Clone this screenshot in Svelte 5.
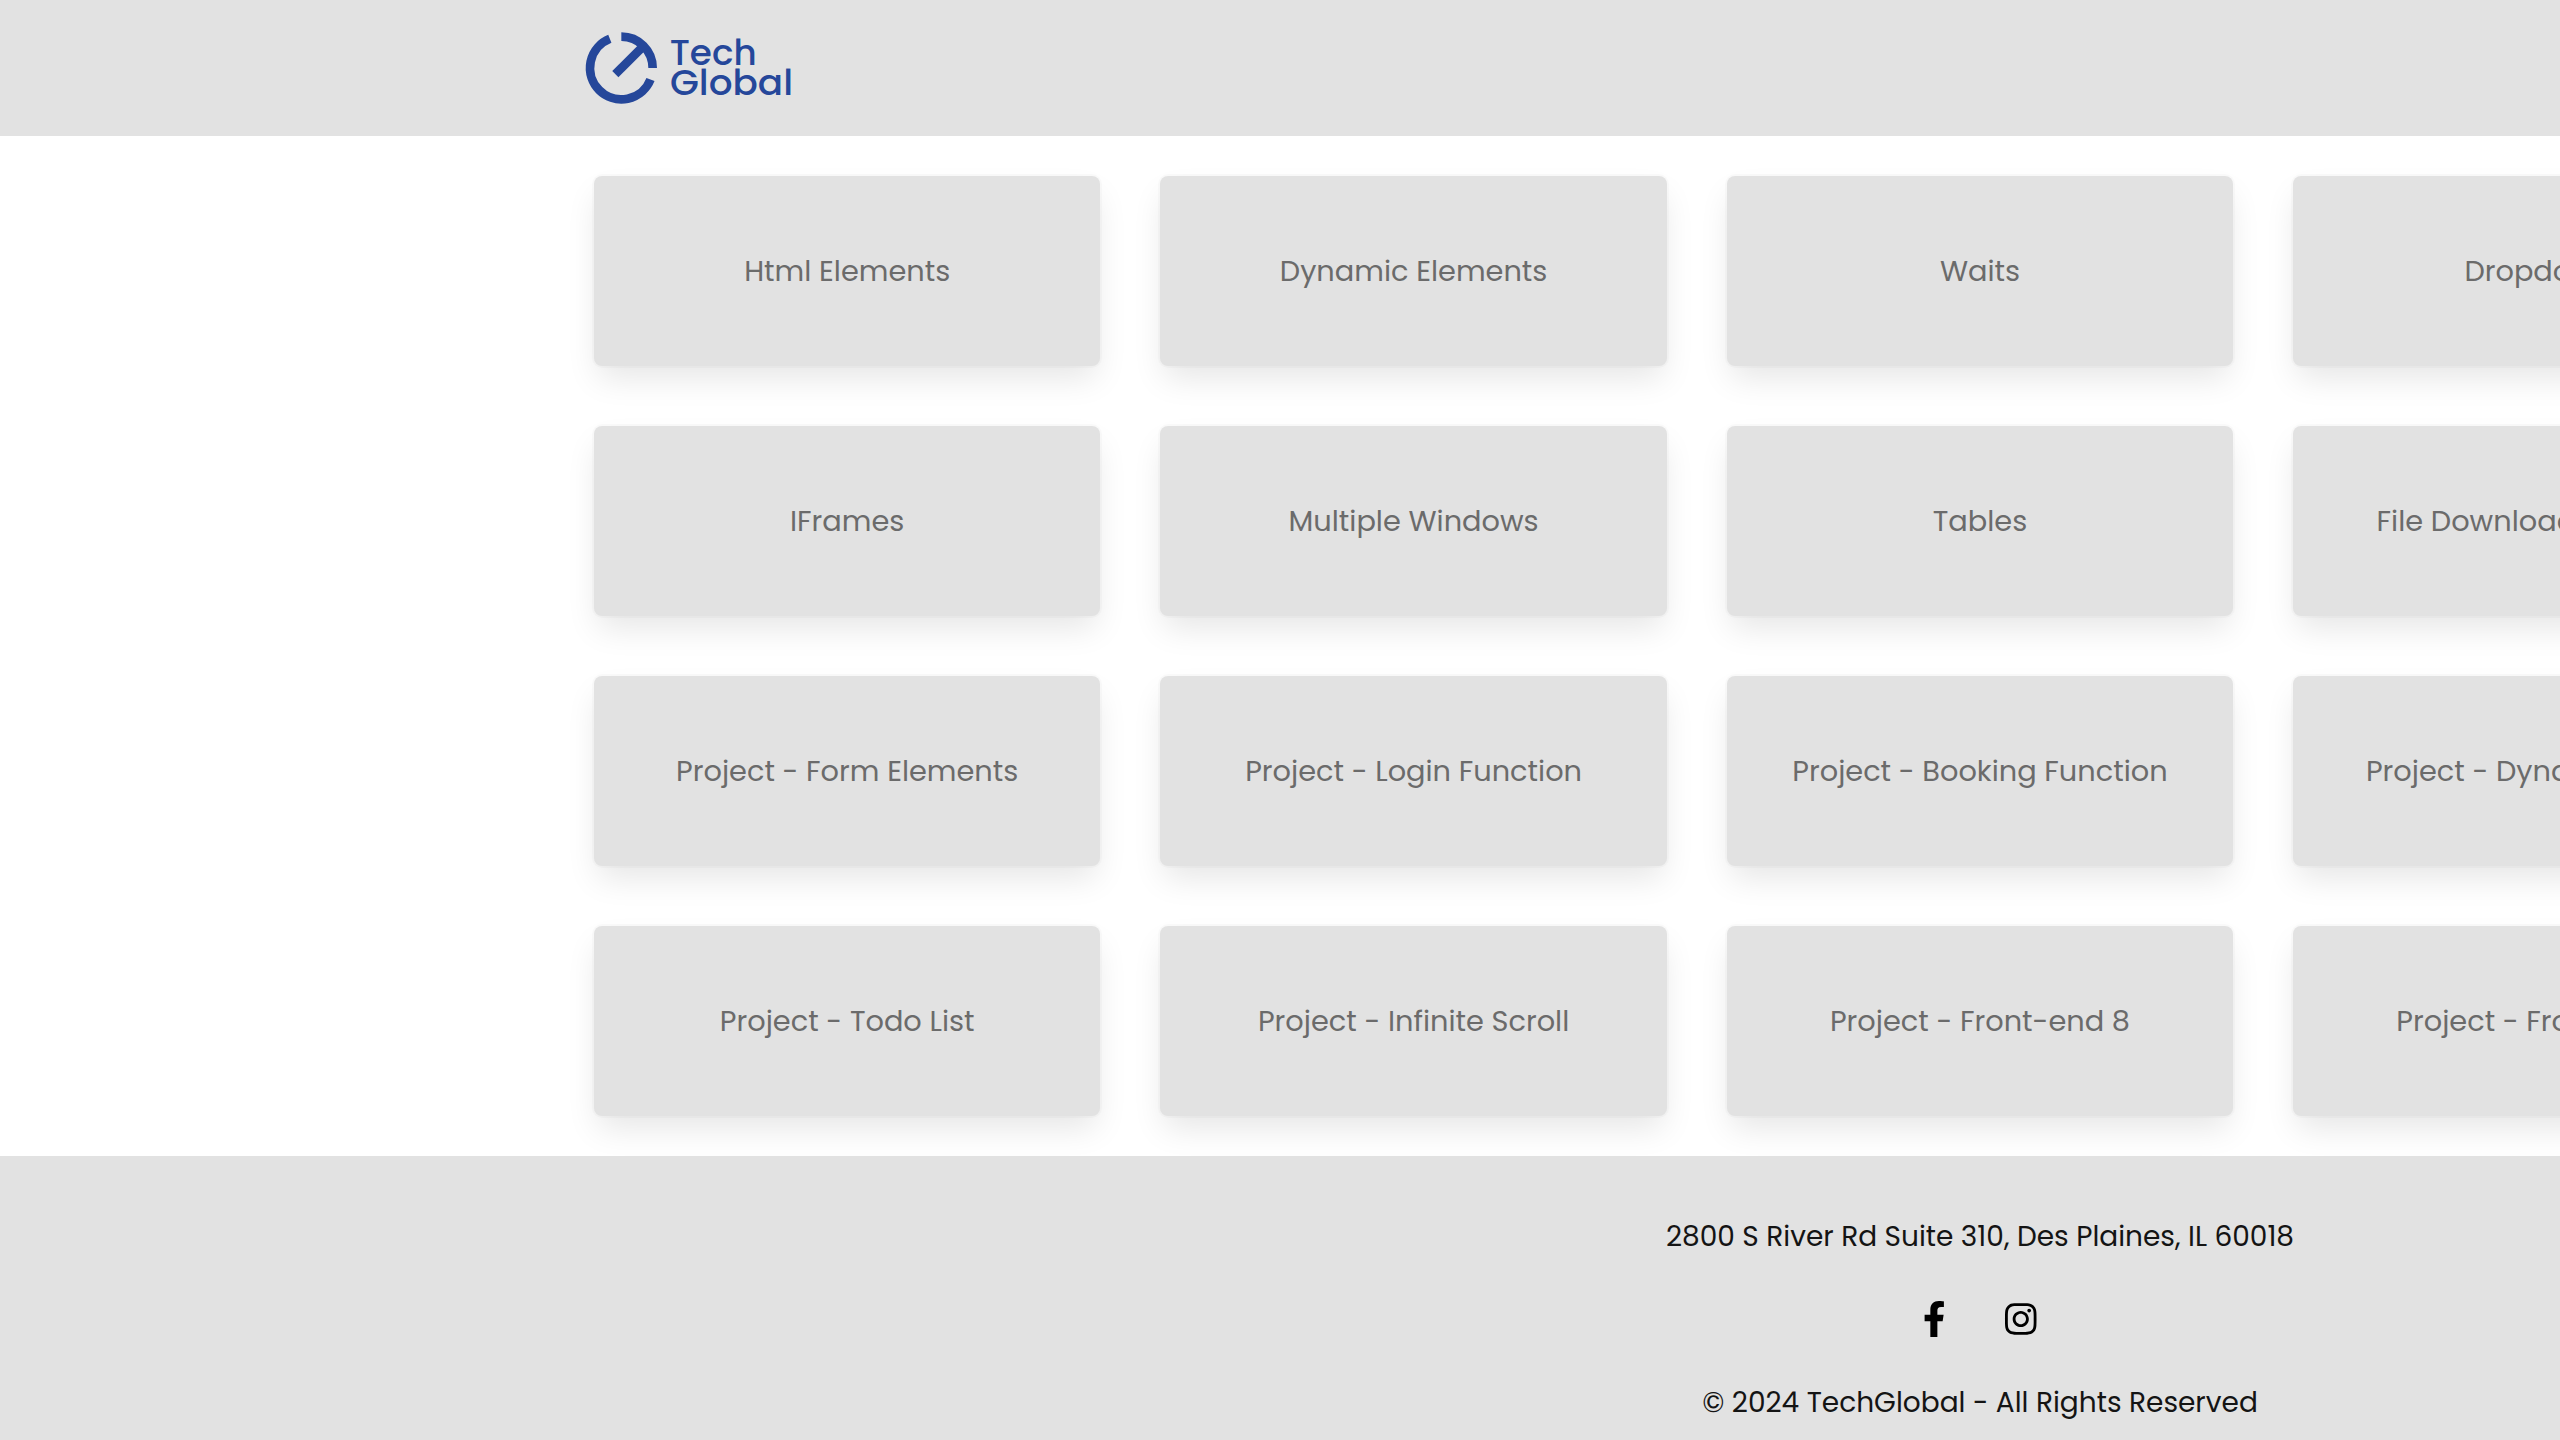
<script lang="ts">
  const cards = [
    'Html Elements',
    'Dynamic Elements',
    'Waits',
    'Dropdowns',
    'IFrames',
    'Multiple Windows',
    'Tables',
    'File Download & Upload',
    'Project - Form Elements',
    'Project - Login Function',
    'Project - Booking Function',
    'Project - Dynamic Tables',
    'Project - Todo List',
    'Project - Infinite Scroll',
    'Project - Front-end 8',
    'Project - Front-end 9',
  ];
</script>

<div class="page">
  <header>
    <svg class="logo" viewBox="75 96 621 216">
      <path d="M184 110a94 94 0 0 1 94 94" />
      <path d="M271.5 238.4a94 94 0 1 1 -122 -121.9" />
      <path d="M166 222.5 248 140.5" />
      <text x="329" y="195" textLength="261" lengthAdjust="spacingAndGlyphs">Tech</text>
      <text x="330" y="286" textLength="369" lengthAdjust="spacingAndGlyphs">Global</text>
    </svg>
  </header>

  <main>
    {#each cards as card}
      <div class="card">{card}</div>
    {/each}
  </main>

  <footer>
    <p>2800 S River Rd Suite 310, Des Plaines, IL 60018</p>
    <div class="social">
      <svg class="facebook" viewBox="0 0 320 512"><path d="M279.14 288l14.22-92.66h-88.91v-60.13c0-25.35 12.42-50.06 52.24-50.06h40.42V6.26S260.43 0 225.36 0c-73.22 0-121.08 44.38-121.08 124.72v70.62H22.89V288h81.39v224h100.17V288z" /></svg>
      <svg class="instagram" viewBox="0 0 448 512"><path d="M224.1 141c-63.6 0-114.9 51.3-114.9 114.9s51.3 114.9 114.9 114.9S339 319.5 339 255.9 287.7 141 224.1 141zm0 189.6c-41.1 0-74.7-33.5-74.7-74.7s33.5-74.7 74.7-74.7 74.7 33.5 74.7 74.7-33.6 74.7-74.7 74.7zm146.4-194.3c0 14.9-12 26.8-26.8 26.8-14.9 0-26.8-12-26.8-26.8s12-26.8 26.8-26.8 26.8 12 26.8 26.8zm76.1 27.2c-1.7-35.9-9.9-67.7-36.2-93.9-26.2-26.2-58-34.4-93.9-36.2-37-2.1-147.9-2.1-184.9 0-35.8 1.7-67.6 9.9-93.9 36.1s-34.4 58-36.2 93.9c-2.1 37-2.1 147.9 0 184.9 1.7 35.9 9.9 67.7 36.2 93.9s58 34.4 93.9 36.2c37 2.1 147.9 2.1 184.9 0 35.9-1.7 67.7-9.9 93.9-36.2 26.2-26.2 34.4-58 36.2-93.9 2.1-37 2.1-147.8 0-184.8zM398.8 388c-7.8 19.6-22.9 34.7-42.6 42.6-29.5 11.7-99.5 9-132.1 9s-102.7 2.6-132.1-9c-19.6-7.8-34.7-22.9-42.6-42.6-11.7-29.5-9-99.5-9-132.1s-2.6-102.7 9-132.1c7.8-19.6 22.9-34.7 42.6-42.6 29.5-11.7 99.5-9 132.1-9s102.7-2.6 132.1 9c19.6 7.8 34.7 22.9 42.6 42.6 11.7 29.5 9 99.5 9 132.1s2.7 102.7-9 132.1z" /></svg>
    </div>
    <p>© 2024 TechGlobal - All Rights Reserved</p>
  </footer>
</div>

<style>
  .page {
    width: 100vw;
    height: 100vh;
    overflow: hidden;
    display: flex;
    flex-direction: column;
    background: #fff;
    font-family: Poppins, Inter, 'Open Sans', sans-serif;
    font-size: 28px;
    line-height: 42px;
  }

  svg {
    display: block;
    flex: none;
    overflow: visible;
  }

  header {
    flex: none;
    display: flex;
    align-items: center;
    height: 136px;
    padding-left: 585px;
    box-sizing: border-box;
    background: #e2e2e2;
  }

  .logo {
    width: 207px;
    height: 72px;
    fill: #25479a;
    font-size: 108px;
    font-weight: 500;
  }

  .logo path {
    fill: none;
    stroke: #25479a;
    stroke-width: 26;
  }

  main {
    flex: none;
    display: grid;
    grid-template-columns: repeat(4, 506.4px);
    grid-auto-rows: 190px;
    gap: 60px;
    padding: 40px 0 40px 594px;
  }

  .card {
    display: flex;
    align-items: center;
    justify-content: center;
    white-space: nowrap;
    font-size: 28.8px;
    border-radius: 8px;
    background: #e2e2e2;
    color: #6b6b6b;
    box-shadow:
      0 16px 32px -4px rgba(10, 10, 10, 0.1),
      0 0 0 2px rgba(10, 10, 10, 0.02);
  }

  /* The footer is centred on the full 3960px page, which runs past the window. */
  footer {
    position: relative;
    flex: none;
    display: flex;
    flex-direction: column;
    align-items: center;
    width: 3960px;
    height: 284px;
    padding-top: 60px;
    box-sizing: border-box;
    background: #e2e2e2;
    color: #141414;
  }

  p {
    margin: 0;
  }

  .social {
    display: flex;
    align-items: center;
    gap: 59.5px;
    height: 36px;
    margin: 43px 0 45px;
    fill: #000;
  }

  .facebook {
    width: 22.5px;
    height: 36px;
  }

  .instagram {
    width: 31.5px;
    height: 36px;
  }
</style>
